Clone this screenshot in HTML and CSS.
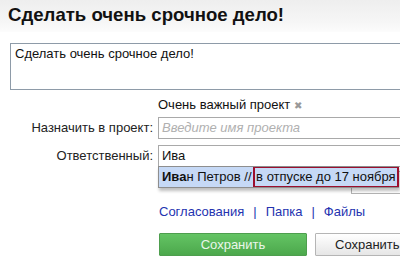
FILE: index.html
```html
<!DOCTYPE html>
<html lang="ru">
<head>
  <meta charset="UTF-8">
  <title>Сделать очень срочное дело!</title>
  <link rel="stylesheet" href="styles.css">
</head>
<body>
  <header class="title-bar">
    <h1>Сделать очень срочное дело!</h1>
  </header>
  <main class="task">
    <div class="task-text">Сделать очень срочное дело!</div>

    <div class="form">
      <div class="form-label"></div>
      <div class="project-tag">Очень важный проект <span class="tag-remove">&#10006;</span></div>

      <label class="form-label label-project">Назначить в проект:</label>
      <div class="field field-project">
        <div class="input placeholder">Введите имя проекта</div>
      </div>

      <label class="form-label label-owner">Ответственный:</label>
      <div class="field field-owner">
        <div class="input">Ива</div>
        <div class="suggest">
          <div class="suggest-item"><b>Ива</b>н Петров // <span class="suggest-note">в отпуске до 17 ноября</span></div>
        </div>
      </div>

      <div class="form-label"></div>
      <div class="field field-extra">
        <div class="extra-box"></div>
      </div>

      <div class="form-label"></div>
      <div class="links">
        <a href="#">Согласования</a><span class="sep">|</span><a href="#">Папка</a><span class="sep">|</span><a href="#">Файлы</a>
      </div>

      <div class="form-label"></div>
      <div class="buttons">
        <button class="btn btn-green">Сохранить</button>
        <button class="btn btn-gray">Сохранить</button>
      </div>
    </div>
  </main>
</body>
</html>
```

FILE: styles.css
```css
html, body {
  margin: 0;
  overflow: hidden;
}
body {
  font-family: "Liberation Sans", Arial, sans-serif;
  font-size: 13px;
  color: #111;
  background: #fff;
  width: 400px;
}
.title-bar {
  height: 32px;
  background: linear-gradient(#eeeeee, #f6f6f6 70%, #fcfcfc);
  padding-left: 8px;
}
.title-bar h1 {
  margin: 0;
  font-size: 18.6px;
  line-height: 30px;
  color: #111;
}
.task {
  padding: 11px 0 0 10px;
}
.task-text {
  width: 420px;
  height: 41px;
  border: 1px solid #8e9ba8;
  padding: 2px 4px 2px 4px;
  line-height: 16px;
}
.form {
  display: grid;
  grid-template-columns: 143px 1fr;
  column-gap: 5px;
  margin-top: 8px;
}
.form-label {
  text-align: right;
  line-height: 22px;
  color: #222;
}
.project-tag {
  line-height: 14px;
  height: 14px;
}
.tag-remove {
  color: #999;
  font-size: 10px;
}
.label-project {
  margin-top: 5px;
}
.field {
  position: relative;
}
.field-project {
  margin-top: 5px;
}
.label-owner, .field-owner {
  margin-top: 6px;
}
.input {
  width: 260px;
  height: 20px;
  line-height: 20px;
  border: 1px solid #a9a9a9;
  padding: 0 3px;
  font-size: 13px;
  background: #fff;
}
.placeholder {
  color: #b0b0b0;
  font-style: italic;
}
.suggest {
  position: absolute;
  left: 0;
  top: 21px;
  width: 241px;
  z-index: 2;
  box-shadow: 1px 3px 3px rgba(0, 0, 0, 0.25);
}
.suggest-item {
  height: 20px;
  line-height: 20px;
  padding-left: 3px;
  background: #c6d9f6;
  border: 1px solid #8e8e8e;
  border-right: none;
  white-space: nowrap;
  overflow: hidden;
}
.suggest-note {
  display: inline-block;
  height: 18px;
  line-height: 18px;
  padding: 0 1px;
  border: 2px solid #9c0f2e;
  margin-top: -1px;
  margin-left: -2px;
  vertical-align: top;
}
.field-extra {
  margin-top: 4px;
  height: 22px;
}
.extra-box {
  margin-left: 193px;
  width: 80px;
  height: 21px;
  border: 1px solid #b4b4b4;
}
.links {
  margin-top: 12px;
  line-height: 14px;
  color: #2433b0;
  padding-left: 1px;
}
.links a {
  color: #2433b0;
  text-decoration: none;
}
.sep {
  margin: 0 9px;
}
.buttons {
  margin-top: 14px;
  display: flex;
  gap: 8px;
  padding-left: 1px;
}
.btn {
  font-family: "Liberation Sans", Arial, sans-serif;
  font-size: 13px;
  height: 23px;
  padding: 0;
  border-radius: 1px;
  cursor: pointer;
}
.btn-green {
  width: 148px;
  background: linear-gradient(#64c464, #4ca84c);
  border: 1px solid #4e9e4e;
  color: #eaf6ea;
}
.btn-gray {
  flex: none;
  padding: 0 12px 0 19px;
  text-align: left;
  background: linear-gradient(#ffffff, #e6e6e6);
  border: 1px solid #b5b5b5;
  color: #222;
}
```
